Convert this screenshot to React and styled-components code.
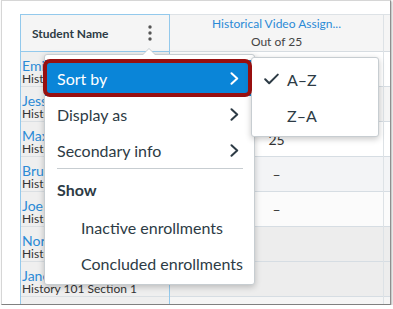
import React from 'react';
import styled, { createGlobalStyle } from 'styled-components';

const Global = createGlobalStyle`
  html, body { margin: 0; padding: 0; background: #fff; }
  body { font-family: Lato, "Noto Sans", sans-serif; color: #2d3b45; }
`;

const Frame = styled.div`
  position: relative;
  box-sizing: border-box;
  margin-left: 1px;
  width: 390px;
  height: 305px;
  border: 1px solid #d6d6d6;
  border-right-color: #8f8f8f;
  border-bottom-color: #808080;
  box-shadow: 1px 1px 2px rgba(0, 0, 0, 0.3);
  overflow: hidden;
  background: #fff;
`;

const Grid = styled.div`
  display: flex;
  padding: 13px 0 0 18px;
`;

const NameCol = styled.div`
  flex: none;
  width: 150px;
  box-sizing: border-box;
  border-left: 1px solid #93c9ec;
  border-right: 1px solid #93c9ec;
`;

const Col = styled.div`
  flex: none;
  width: ${p => p.$w}px;
  box-sizing: border-box;
  border-right: 1px solid #dde2e6;
`;

const NameHeader = styled.div`
  height: 38px;
  box-sizing: border-box;
  background: #f5f5f5;
  border-top: 1px solid #93c9ec;
  border-bottom: 1px solid #93c9ec;
  display: flex;
  align-items: center;
  justify-content: space-between;
  padding: 0 17px 0 11px;
  font-size: 12px;
  font-weight: 700;
  color: #2d3b45;
`;

const ColHeader = styled.div`
  height: 38px;
  box-sizing: border-box;
  background: #f5f5f5;
  border-top: 1px solid #dde2e6;
  border-bottom: 1px solid #d6dce1;
  display: flex;
  flex-direction: column;
  align-items: center;
  justify-content: center;
  gap: 4px;
  font-size: 12px;
  line-height: 14px;
`;

const HeaderLink = styled.span`
  color: #2b8ad6;
`;

const HeaderSub = styled.span`
  color: #444;
`;

const NameCell = styled.div`
  height: 35px;
  box-sizing: border-box;
  background: #efefef;
  border-bottom: 1px solid #dadfe3;
  padding: 7px 0 0 1px;
  white-space: nowrap;
  overflow: hidden;
  display: flex;
  flex-direction: column;
`;

const StudentLink = styled.span`
  font-size: 14px;
  line-height: 13px;
  color: #2b8ad6;
`;

const Section = styled.span`
  font-size: 12px;
  line-height: 13px;
  color: #333;
`;

const ScoreCell = styled.div`
  height: 35px;
  box-sizing: border-box;
  background: ${p => p.$bg};
  border-bottom: 1px solid #d6dde3;
  display: flex;
  align-items: center;
  justify-content: center;
  font-size: 14px;
  color: #333;
`;

const Menu = styled.div`
  position: absolute;
  left: 42px;
  top: 53px;
  width: 211px;
  box-sizing: border-box;
  background: #fff;
  border: 1px solid #c7cdd1;
  border-radius: 3px;
  box-shadow: 0 2px 6px rgba(0, 0, 0, 0.22);
  padding: 5px 0 3px;
  font-size: 16px;
  color: #2d3b45;

  &::before, &::after {
    content: '';
    position: absolute;
    left: 97px;
    width: 0;
    height: 0;
    border: 7px solid transparent;
    border-top: 0;
  }
  &::before { top: -7px; border-bottom-color: #c7cdd1; }
  &::after { top: -6px; border-bottom-color: #fff; }
`;

const Item = styled.div`
  position: relative;
  z-index: 1;
  height: 36px;
  display: flex;
  align-items: center;
  justify-content: space-between;
  white-space: nowrap;
  padding: 0 15px 0 ${p => (p.$indent ? 36 : 12)}px;
  background: ${p => (p.$active ? '#0a85d8' : 'transparent')};
  color: ${p => (p.$active ? '#fff' : '#2d3b45')};
`;

const GroupLabel = styled.div`
  height: 40px;
  display: flex;
  align-items: center;
  padding-left: 12px;
  font-weight: 700;
`;

const Divider = styled.div`
  height: 1px;
  margin: 0 11px 0 12px;
  background: #c7cdd1;
`;

const Highlight = styled.div`
  position: absolute;
  z-index: 3;
  left: 41px;
  top: 58px;
  width: 209px;
  height: 38px;
  box-sizing: border-box;
  border: 4px solid #980f0f;
  border-radius: 7px;
`;

const SubMenu = styled.div`
  position: absolute;
  z-index: 2;
  left: 249px;
  top: 56px;
  width: 128px;
  box-sizing: border-box;
  background: #fff;
  border: 1px solid #c7cdd1;
  border-radius: 3px;
  box-shadow: 0 2px 6px rgba(0, 0, 0, 0.22);
  padding: 3px 0;
  font-size: 16px;
  color: #2d3b45;
`;

const SubItem = styled.div`
  height: 36px;
  display: flex;
  align-items: center;
  gap: 8px;
  padding-left: 12px;
`;

const CheckSlot = styled.span`
  width: 15px;
  display: flex;
  align-items: center;
`;

const Chevron = ({ color }) => (
  <svg width="9" height="13" viewBox="0 0 9 13" fill="none">
    <path d="M1.5 1.2 L7.2 6.5 L1.5 11.8" stroke={color} strokeWidth="2" strokeLinecap="round" strokeLinejoin="round" />
  </svg>
);

const Check = () => (
  <svg width="15" height="12" viewBox="0 0 15 12" fill="none">
    <path d="M1.2 6.2 L5.2 10.2 L13.8 1.6" stroke="#2d3b45" strokeWidth="2" strokeLinecap="round" strokeLinejoin="round" />
  </svg>
);

const Kebab = () => (
  <svg width="4" height="16" viewBox="0 0 4 16">
    <circle cx="2" cy="2" r="1.7" fill="#555" />
    <circle cx="2" cy="8" r="1.7" fill="#555" />
    <circle cx="2" cy="14" r="1.7" fill="#555" />
  </svg>
);

const students = [
  'Emily Adams',
  'Jessica Jones',
  'Max Miller',
  'Bruce Wayne',
  'Joe Brown',
  'Norah Lee',
  'Jane Doe',
  '',
];

const scores = [
  { v: '', bg: '#ffffff' },
  { v: '', bg: '#f5f5f5' },
  { v: '25', bg: '#ffffff' },
  { v: '–', bg: '#f3f4f6' },
  { v: '–', bg: '#fbfbfb' },
  { v: '', bg: '#ededed' },
  { v: '', bg: '#ededed' },
  { v: '', bg: '#f5f5f5' },
];

export default function App() {
  return (
    <>
      <Global />
      <Frame>
        <Grid>
          <NameCol>
            <NameHeader>
              <span>Student Name</span>
              <Kebab />
            </NameHeader>
            {students.map((name, i) => (
              <NameCell key={i}>
                {name && (
                  <>
                    <StudentLink>{name}</StudentLink>
                    <Section>History 101 Section 1</Section>
                  </>
                )}
              </NameCell>
            ))}
          </NameCol>
          <Col $w={214}>
            <ColHeader>
              <HeaderLink>Historical Video Assign...</HeaderLink>
              <HeaderSub>Out of 25</HeaderSub>
            </ColHeader>
            {scores.map((s, i) => (
              <ScoreCell key={i} $bg={s.bg}>{s.v}</ScoreCell>
            ))}
          </Col>
          <Col $w={40}>
            <ColHeader />
            {scores.map((s, i) => (
              <ScoreCell key={i} $bg={s.bg} />
            ))}
          </Col>
        </Grid>

        <Menu>
          <Item $active>
            <span>Sort by</span>
            <Chevron color="#fff" />
          </Item>
          <Item>
            <span>Display as</span>
            <Chevron color="#2d3b45" />
          </Item>
          <Item>
            <span>Secondary info</span>
            <Chevron color="#2d3b45" />
          </Item>
          <Divider />
          <GroupLabel>Show</GroupLabel>
          <Item $indent>Inactive enrollments</Item>
          <Item $indent>Concluded enrollments</Item>
        </Menu>
        <Highlight />

        <SubMenu>
          <SubItem>
            <CheckSlot><Check /></CheckSlot>
            <span>A–Z</span>
          </SubItem>
          <SubItem>
            <CheckSlot />
            <span>Z–A</span>
          </SubItem>
        </SubMenu>
      </Frame>
    </>
  );
}
